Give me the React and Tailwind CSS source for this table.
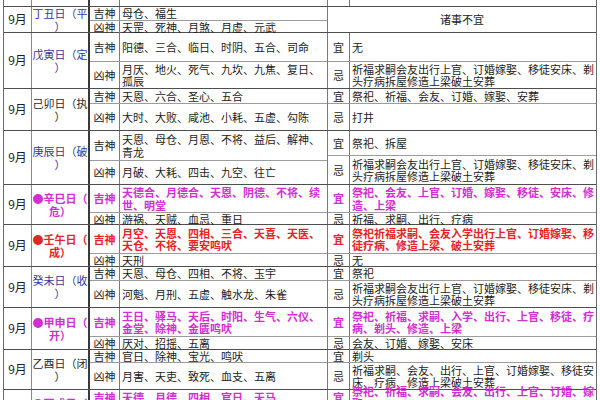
const MAG = 'text-[#d22fd2] font-bold';
const RED = 'text-[#e42428] font-bold';
const BLUE = 'text-[#36369a]';
const DARK = 'text-[#2a2a2a]';

const rows = [
  {
    h: 'h-[26px]', date: ['丁丑日（平', '）'], dc: BLUE,
    left: [['吉神', '母仓、福生', '', 'h-[13px]'], ['凶神', '天罡、死神、月煞、月虚、元武', '']],
    merged: '诸事不宜',
  },
  {
    h: 'h-[56px]', date: ['戊寅日（定', '）'], dc: BLUE,
    left: [['吉神', '阳德、三合、临日、时阴、五合、司命', '', 'h-[28px]'], ['凶神', '月厌、地火、死气、九坎、九焦、复日、孤辰', '']],
    right: [['宜', '无', '', 'h-[28px]'], ['忌', '祈福求嗣会友出行上官、订婚嫁娶、移徒安床、剃头疗病拆屋修造上梁破土安葬', '']],
  },
  {
    h: 'h-[42px]', date: ['己卯日（执', '）'], dc: DARK,
    left: [['吉神', '天恩、六合、圣心、五合', '', 'h-[14px]'], ['凶神', '大时、大败、咸池、小耗、五虚、勾陈', '']],
    right: [['宜', '祭祀、祈福、会友、订婚、嫁娶、安葬', '', 'h-[14px]'], ['忌', '打井', '']],
  },
  {
    h: 'h-[54px]', date: ['庚辰日（破', '）'], dc: BLUE,
    left: [['吉神', '天恩、母仓、月恩、不将、益后、解神、青龙', '', 'h-[29px]'], ['凶神', '月破、大耗、四击、九空、往亡', '']],
    right: [['宜', '祭祀、拆屋', '', 'h-[24px]'], ['忌', '祈福求嗣会友出行上官、订婚嫁娶、移徒安床、剃头疗病拆屋修造上梁破土安葬', '']],
  },
  {
    h: 'h-[40px]', date: ['●辛巳日（', '危）'], dc: MAG,
    left: [['吉神', '天德合、月德合、天恩、阴德、不将、续世、明堂', MAG, 'h-[27px]'], ['凶神', '游祸、天贼、血忌、重日', '']],
    right: [['宜', '祭祀、会友、上官、订婚、嫁娶、移徒、安床、修造、上梁', MAG, 'h-[27px]'], ['忌', '祈福、求嗣、出行、疗病', '']],
  },
  {
    h: 'h-[42px]', date: ['●壬午日（', '成）'], dc: RED,
    left: [['吉神', '月空、天恩、四相、三合、天喜、天医、天仓、不将、要安鸣吠', RED, 'h-[28px]'], ['凶神', '天刑', '']],
    right: [['宜', '祭祀祈福求嗣、会友入学出行上官、订婚嫁娶、移徒疗病、修造上梁、破土安葬', RED, 'h-[28px]'], ['忌', '无', '']],
  },
  {
    h: 'h-[41px]', date: ['癸未日（收', '）'], dc: BLUE,
    left: [['吉神', '天恩、母仓、四相、不将、玉宇', '', 'h-[13px]'], ['凶神', '河魁、月刑、五虚、触水龙、朱雀', '']],
    right: [['宜', '祭祀', '', 'h-[13px]'], ['忌', '祈福求嗣会友出行上官、订婚嫁娶、移徒安床、剃头疗病拆屋修造上梁破土安葬', '']],
  },
  {
    h: 'h-[42px]', date: ['●甲申日（', '开）'], dc: MAG,
    left: [['吉神', '王日、驿马、天后、时阳、生气、六仪、金堂、除神、金匮鸣吠', MAG, 'h-[28px]'], ['凶神', '厌对、招摇、五离', '']],
    right: [['宜', '祭祀、祈福、求嗣、入学、出行、上官、移徒、疗病、剃头、修造、上梁', MAG, 'h-[28px]'], ['忌', '会友、订婚、嫁娶、安床', '']],
  },
  {
    h: 'h-[40px]', date: ['乙酉日（闭', '）'], dc: DARK,
    left: [['吉神', '官日、除神、宝光、鸣吠', '', 'h-[12px]'], ['凶神', '月害、天吏、致死、血支、五离', '']],
    right: [['宜', '剃头', '', 'h-[12px]'], ['忌', '祈福求嗣、会友、出行、上官、订婚嫁娶、移徒安床、疗病、修造上梁破土安葬', '']],
  },
  {
    h: 'h-[40px]', date: ['●丙戌日（', '闭）'], dc: MAG,
    left: [['吉神', '天德、月德、四相、官日、天马', MAG, 'h-[14px]'], ['凶神', '天吏、致死、五虚', '']],
    right: [['宜', '祭祀、祈福、求嗣、会友、出行、上官、订婚、嫁娶', MAG, 'h-[14px]'], ['忌', '无', '']],
  },
];

const Sub = ({ item, lw }) => {
  const [label, text, tone, h] = item;
  return (
    <div className={h ? `flex flex-none ${h}` : 'flex flex-1 border-t border-[#9c9c9c]'}>
      <div className={`${lw} flex-none flex items-center justify-center border-r border-[#7a7a7a] ${tone}`}>
        {label}
      </div>
      <div className={`flex-1 flex items-center pl-[2px] ${tone}`}>
        <span>{text}</span>
      </div>
    </div>
  );
};

const Row = ({ r }) => (
  <div className={`flex border-b border-[#4e4e4e] ${r.h}`}>
    <div className="w-[28px] flex-none flex items-center justify-center border-r border-[#8a8a8a] text-[12px]">
      9月
    </div>
    <div className={`w-[58px] flex-none flex flex-col items-center justify-center border-r-2 border-[#3a3a3a] ${r.dc}`}>
      {r.date.map((d, i) => (
        <div key={i} className="whitespace-nowrap text-center leading-[13px]">{d}</div>
      ))}
    </div>
    <div className="w-[238px] flex-none flex flex-col border-r border-[#7a7a7a]">
      {r.left.map((it, i) => <Sub key={i} item={it} lw="w-[30px]" />)}
    </div>
    {r.merged ? (
      <div className="flex-1 flex items-center justify-center">{r.merged}</div>
    ) : (
      <div className="flex-1 flex flex-col">
        {r.right.map((it, i) => <Sub key={i} item={it} lw="w-[22px]" />)}
      </div>
    )}
  </div>
);

export default function App() {
  return (
    <div className="w-[600px] h-[400px] overflow-hidden bg-white text-[11px] leading-[12.5px] text-[#1c1c1c] font-['Noto_Sans_CJK_SC','Noto_Sans',sans-serif]">
      <div className="ml-[3px] w-[594px] border-l border-r border-[#6a6a6a]">
        {/* clipped row above */}
        <div className="flex h-[7px] border-b border-[#4e4e4e]">
          <div className="w-[28px] flex-none border-r border-[#8a8a8a]" />
          <div className="w-[58px] flex-none border-r-2 border-[#3a3a3a]" />
          <div className="w-[30px] flex-none border-r border-[#7a7a7a]" />
          <div className="w-[208px] flex-none border-r border-[#7a7a7a]" />
          <div className="w-[22px] flex-none border-r border-[#7a7a7a]" />
          <div className="flex-1" />
        </div>
        {rows.map((r, i) => <Row key={i} r={r} />)}
      </div>
    </div>
  );
}
